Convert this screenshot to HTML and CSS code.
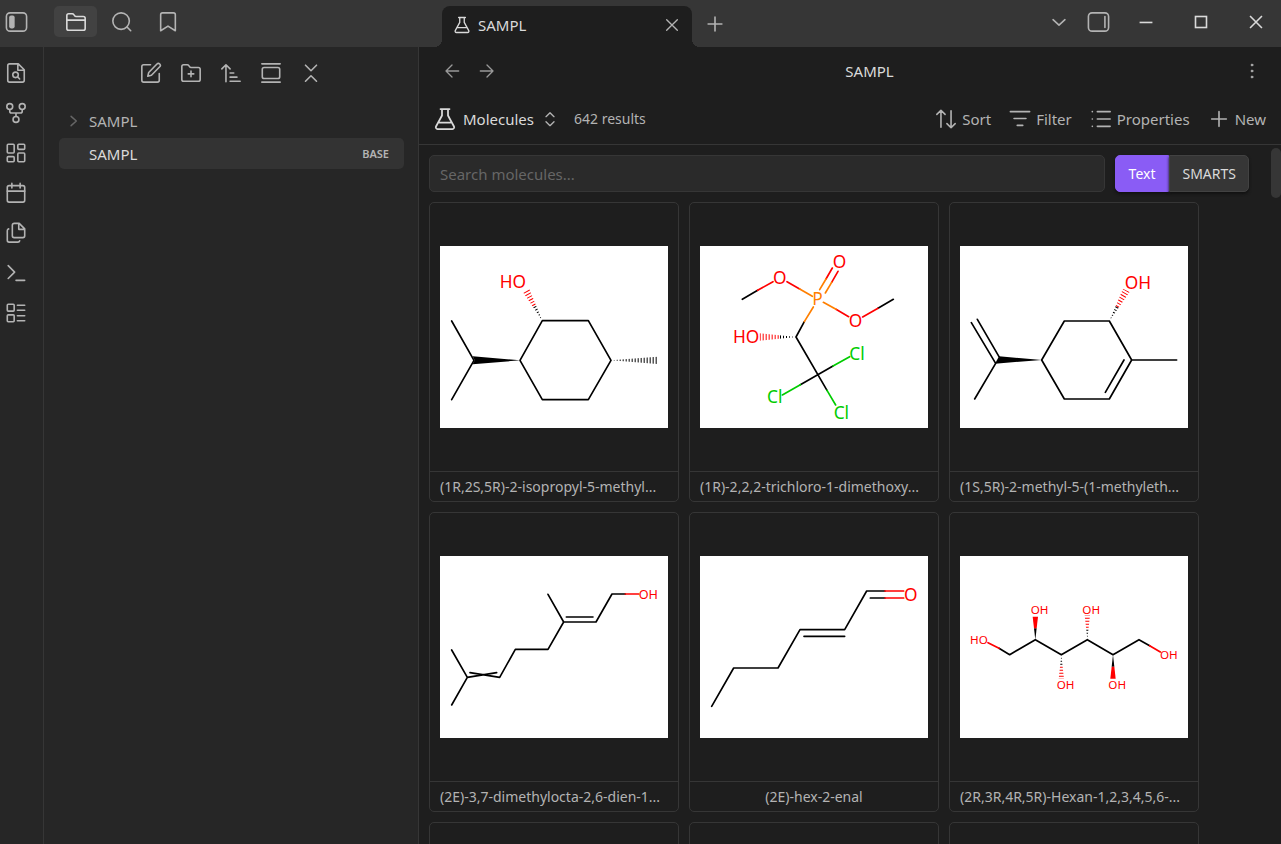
FILE: index.html
```html
<!DOCTYPE html>
<html lang="en">
<head>
<meta charset="utf-8">
<title>SAMPL</title>
<link rel="stylesheet" href="styles.css">
</head>
<body>
<div class="app">
  <header class="titlebar">
    <div class="titlebar-left">
      <button class="icon-btn" aria-label="Toggle left sidebar"><svg class="icon panel" viewBox="0 0 24 24"><rect x="1" y="2" width="22" height="20" rx="4"/><rect x="4" y="5" width="6" height="14" rx="2" class="solid"/></svg></button>
      <nav class="side-tabs">
        <button class="side-tab active" aria-label="Files"><svg class="icon" viewBox="0 0 24 24"><path d="M2 10h20M4 21h16a2 2 0 0 0 2-2V8a2 2 0 0 0-2-2h-7.900a2 2 0 0 1-1.700-.9l-.8-1.200A2 2 0 0 0 7.900 3H4a2 2 0 0 0-2 2v14a2 2 0 0 0 2 2z"/></svg></button>
        <button class="side-tab" aria-label="Search"><svg class="icon" viewBox="0 0 24 24"><circle cx="11" cy="11" r="9"/><path d="m21.500 21.500-4-4"/></svg></button>
        <button class="side-tab" aria-label="Bookmarks"><svg class="icon" viewBox="0 0 24 24"><path d="m20 21.500-8-5-8 5V4a2 2 0 0 1 2-2h12a2 2 0 0 1 2 2z"/></svg></button>
      </nav>
    </div>
    <div class="titlebar-main">
      <div class="tab">
        <svg class="icon flask" viewBox="0 0 24 24"><path d="M9 2v6.500L3 19.500A1.700 1.700 0 0 0 4.500 22h15a1.700 1.700 0 0 0 1.500-2.500L15 8.500V2M7.500 2h9M6.500 15.500h11"/></svg>
        <span class="tab-title">SAMPL</span>
        <button class="icon-btn" aria-label="Close tab"><svg class="icon small" viewBox="0 0 24 24"><path d="M4 4l16 16M20 4 4 20"/></svg></button>
      </div>
      <button class="icon-btn new-tab" aria-label="New tab"><svg class="icon" viewBox="0 0 24 24"><path d="M4.500 12h15M12 4.500v15"/></svg></button>
      <div class="window-controls">
        <button class="icon-btn" aria-label="Tab list"><svg class="icon" viewBox="0 0 24 24"><path d="m5.500 9.500 6.500 6 6.500-6"/></svg></button>
        <button class="icon-btn" aria-label="Toggle right sidebar"><svg class="icon panel" viewBox="0 0 24 24"><rect x="1" y="2" width="22" height="20" rx="4"/><path d="M19 6v12"/></svg></button>
        <button class="win-btn" aria-label="Minimize"><svg class="icon" viewBox="0 0 24 24"><path d="M5 12.500h14"/></svg></button>
        <button class="win-btn" aria-label="Maximize"><svg class="icon" viewBox="0 0 24 24"><rect x="6" y="6" width="12" height="12"/></svg></button>
        <button class="win-btn" aria-label="Close"><svg class="icon" viewBox="0 0 24 24"><path d="M5.500 5.500l13 13M18.500 5.500l-13 13"/></svg></button>
      </div>
    </div>
  </header>
  <div class="workspace">
    <nav class="ribbon">
      <button class="icon-btn" aria-label="Quick switcher"><svg class="icon" viewBox="0 0 24 24"><path d="M14.500 2H5a2 2 0 0 0-2 2v16a2 2 0 0 0 2 2h14a2 2 0 0 0 2-2V8.500zM14 2v7h7"/><circle cx="11.500" cy="14" r="3"/><path d="m14 16.500 2 2"/></svg></button>
      <button class="icon-btn" aria-label="Graph view"><svg class="icon" viewBox="0 0 24 24"><circle cx="12" cy="19" r="3.200"/><circle cx="5.200" cy="5" r="3.200"/><circle cx="18.800" cy="5" r="3.200"/><path d="M18.800 8.200V10a2 2 0 0 1-2 2H7.200a2 2 0 0 1-2-2V8.200M12 12v3.800"/></svg></button>
      <button class="icon-btn" aria-label="Canvas"><svg class="icon" viewBox="0 0 24 24"><rect x="2.500" y="2.500" width="7.500" height="9.500" rx="1"/><rect x="14" y="2.500" width="7.500" height="5.500" rx="1"/><rect x="14" y="12" width="7.500" height="9.500" rx="1"/><rect x="2.500" y="16" width="7.500" height="5.500" rx="1"/></svg></button>
      <button class="icon-btn" aria-label="Daily note"><svg class="icon" viewBox="0 0 24 24"><rect x="2.500" y="4" width="19" height="18" rx="2"/><path d="M7.500 1.500v5M16.500 1.500v5M2.500 10h19"/></svg></button>
      <button class="icon-btn" aria-label="Templates"><svg class="icon" viewBox="0 0 24 24"><path d="M15.500 1.500H10a2 2 0 0 0-2 2V15a2 2 0 0 0 2 2h9.500a2 2 0 0 0 2-2V7.500zM15 2v6h6M4 7.500a2 2 0 0 0-1.500 2V20a2 2 0 0 0 2 2H14a2 2 0 0 0 2-1.500"/></svg></button>
      <button class="icon-btn" aria-label="Command palette"><svg class="icon" viewBox="0 0 24 24"><path d="m3.500 18 7-7-7-7M12 20h9.500"/></svg></button>
      <button class="icon-btn" aria-label="Bases"><svg class="icon" viewBox="0 0 24 24"><rect x="2.500" y="2.500" width="7.500" height="7.500" rx="1"/><rect x="2.500" y="14" width="7.500" height="7.500" rx="1"/><path d="M13.500 3.500h8M13.500 9h8M13.500 15h8M13.500 20.500h8"/></svg></button>
    </nav>
    <aside class="sidebar">
      <div class="nav-buttons">
        <button class="icon-btn" aria-label="New note"><svg class="icon" viewBox="0 0 24 24"><path d="M11.500 3H4a2 2 0 0 0-2 2v15a2 2 0 0 0 2 2h15a2 2 0 0 0 2-2v-7.500"/><path d="M18.500 2.200a2.100 2.100 0 0 1 3 3L12.500 14.500l-4 1 1-4z"/></svg></button>
        <button class="icon-btn" aria-label="New folder"><svg class="icon" viewBox="0 0 24 24"><path d="M12 10v6M9 13h6M20 21a2 2 0 0 0 2-2V8a2 2 0 0 0-2-2h-7.900a2 2 0 0 1-1.700-.9l-.8-1.200A2 2 0 0 0 7.900 3H4a2 2 0 0 0-2 2v14a2 2 0 0 0 2 2z"/></svg></button>
        <button class="icon-btn" aria-label="Sort order"><svg class="icon" viewBox="0 0 24 24"><path d="m2 7.500 4.500-4.500L11 7.500M6.500 3v18.500M11 12h4M11 16.500h7.500M11 21h11"/></svg></button>
        <button class="icon-btn" aria-label="Auto-reveal file"><svg class="icon" viewBox="0 0 24 24"><path d="M2 2h20M2 22h20"/><rect x="2.500" y="6" width="19" height="12" rx="2"/></svg></button>
        <button class="icon-btn" aria-label="Collapse all"><svg class="icon" viewBox="0 0 24 24"><path d="m6 21 6-6 6 6M6 3.500l6 6 6-6"/></svg></button>
      </div>
      <div class="tree">
        <a class="tree-item" href="#"><svg class="icon chevron" viewBox="0 0 24 24"><path d="m7 4 9 8-9 8"/></svg><span class="tree-name">SAMPL</span></a>
        <a class="tree-item active" href="#"><span class="chevron"></span><span class="tree-name">SAMPL</span><span class="tag">BASE</span></a>
      </div>
    </aside>
    <main class="view">
      <div class="view-header">
        <div class="history">
          <button class="icon-btn" aria-label="Back"><svg class="icon small" viewBox="0 0 24 24"><path d="M22 12H3M12 21l-9-9 9-9"/></svg></button>
          <button class="icon-btn" aria-label="Forward"><svg class="icon small" viewBox="0 0 24 24"><path d="M2 12h19M12 3l9 9-9 9"/></svg></button>
        </div>
        <h1 class="view-title">SAMPL</h1>
        <button class="icon-btn" aria-label="More options"><svg class="icon small dots" viewBox="0 0 24 24"><circle cx="12" cy="3" r="1.500"/><circle cx="12" cy="12" r="1.500"/><circle cx="12" cy="21" r="1.500"/></svg></button>
      </div>
      <div class="toolbar">
        <button class="tool-btn views"><svg class="icon large flask" viewBox="0 0 24 24"><path d="M9 2v6.500L3 19.500A1.700 1.700 0 0 0 4.500 22h15a1.700 1.700 0 0 0 1.500-2.500L15 8.500V2M7.500 2h9M6.500 15.500h11"/></svg><span>Molecules</span><svg class="icon small" viewBox="0 0 24 24"><path d="m6 16 6 6 6-6M6 8.500l6-6 6 6"/></svg></button>
        <span class="results">642 results</span>
        <div class="tools">
          <button class="tool-btn"><svg class="icon" viewBox="0 0 24 24"><path d="M2 7l4.500-4.500L11 7M6.500 2.500v18.500M22 17l-4.500 4.500L13 17M17.500 21.500V3"/></svg>Sort</button>
          <button class="tool-btn"><svg class="icon" viewBox="0 0 24 24"><path d="M1.500 4h21M5.500 11.500h13M9 19h6"/></svg>Filter</button>
          <button class="tool-btn"><svg class="icon" viewBox="0 0 24 24"><path d="M8 4h14M8 12h14M8 20h14M2.500 4h.1M2.500 12h.1M2.500 20h.1"/></svg>Properties</button>
          <button class="tool-btn"><svg class="icon" viewBox="0 0 24 24"><path d="M4 12h16M12 4v16"/></svg>New</button>
        </div>
      </div>
      <div class="content">
        <div class="search-row">
          <input class="search" type="text" placeholder="Search molecules..." aria-label="Search molecules">
          <div class="modes"><button class="mode on">Text</button><button class="mode">SMARTS</button></div>
        </div>
        <div class="cards">
          <article class="card">
            <div class="cover"><svg class="mol" viewBox="45 136 684 547">
              <clipPath id="a1"><path d="M352 360 293 273 312 263z"/></clipPath>
              <clipPath id="a2"><path d="M558 479 697 468V490z"/></clipPath>
              <path d="M352 360H490L558 479 490 597H352L285 479zM80 361l67 118-67 118"/>
              <path class="fill" d="M285 479 143 467 149 479 143 491z"/>
              <g clip-path="url(#a1)"><path class="hash" d="M352 360 327 314"/><path class="hash o" d="M327 314 300 264"/></g>
              <g clip-path="url(#a2)"><path class="hash" d="M695 479H558"/></g>
              <text class="ot" x="224" y="262">HO</text>
            </svg></div>
            <h2 class="card-title long">(1R,2S,5R)-2-isopropyl-5-methyl...</h2>
          </article>
          <article class="card">
            <div class="cover"><svg class="mol" viewBox="45 136 684 547">
              <clipPath id="b1"><path d="M333 409 224 398V420z"/></clipPath>
              <path d="M172 296l46-27M625 296l-46 27M358 363 333 409 426 569M444 496 346 552"/>
              <path class="o" d="M218 269l46-26M306 243l38 22M579 323l-46 26M491 348l-38-22M442 202 423 235M459 212 440 245"/>
              <path class="p" d="M344 265l38 22M423 235 404 267M440 245 421 277M453 326l-38-21M385 319 358 363"/>
              <path class="cl" d="M444 496l50-28M346 552l-54 31M426 569l26 44"/>
              <g clip-path="url(#b1)"><path class="hash" d="M333 409H281"/><path class="hash o" d="M281 409H224"/></g>
              <text class="ot" x="443" y="202">O</text><text class="ot" x="264" y="250">O</text><text class="ot" x="491" y="380">O</text><text class="ot" x="144" y="427">HO</text>
              <text class="pt" x="382" y="313">P</text>
              <text class="ct" x="493" y="478">Cl</text><text class="ct" x="246" y="608">Cl</text><text class="ct" x="446" y="655">Cl</text>
            </svg></div>
            <h2 class="card-title long">(1R)-2,2,2-trichloro-1-dimethoxy...</h2>
          </article>
          <article class="card">
            <div class="cover"><svg class="mol" viewBox="45 136 684 547">
              <clipPath id="c1"><path d="M493 361 534 264 554 274z"/></clipPath>
              <path d="M493 361 560 478 493 595H358L290 478 358 361zM560 478H695M537 478 481 575M89 595 152 488M79 366l73 122M97 356l65 112"/>
              <path class="fill" d="M290 478 162 467 150 489z"/>
              <g clip-path="url(#c1)"><path class="hash" d="M493 361 516 318"/><path class="hash o" d="M516 318 544 268"/></g>
              <text class="ot" x="539" y="264">OH</text>
            </svg></div>
            <h2 class="card-title long">(1S,5R)-2-methyl-5-(1-methyleth...</h2>
          </article>
          <article class="card">
            <div class="cover"><svg class="mol" viewBox="45 136 684 547">
              <path d="M369 251 416 334H513L561 250H601M424 319h80M416 334 369 416H271L224 500 135 486M215 486 127 500 80 418M127 500 80 583"/>
              <path class="o" d="M601 250h40"/>
              <text class="ot s1" x="641" y="264">OH</text>
            </svg></div>
            <h2 class="card-title long">(2E)-3,7-dimethylocta-2,6-dien-1...</h2>
          </article>
          <article class="card">
            <div class="cover"><svg class="mol" viewBox="45 136 684 547">
              <path d="M80 587 146 472H279L345 357H479L545 241H600M357 377H479M556 262H600"/>
              <path class="o" d="M600 241h56M600 262h56"/>
              <text class="ot" x="657" y="271">O</text>
            </svg></div>
            <h2 class="card-title">(2E)-hex-2-enal</h2>
          </article>
          <article class="card">
            <div class="cover"><svg class="mol" viewBox="45 136 684 547">
              <clipPath id="f1"><path d="M349 432 341 505H357z"/></clipPath>
              <clipPath id="f2"><path d="M427 387 419 314H435z"/></clipPath>
              <path d="M162 413 194 432 271 387 349 432 427 387 504 432 582 387 614 405"/>
              <path class="o" d="M162 413 129 396M614 405l32 19"/>
              <path class="fill" d="M271 387 267 353H275z"/><path class="fill of" d="M267 353 263 318H279L275 353z"/>
              <path class="fill" d="M504 432 500 468H508z"/><path class="fill of" d="M500 468 496 504H512L508 468z"/>
              <g clip-path="url(#f1)"><path class="hash" d="M349 432V468"/><path class="hash o" d="M349 468V505"/></g>
              <g clip-path="url(#f2)"><path class="hash" d="M427 387V351"/><path class="hash o" d="M427 351V314"/></g>
              <text class="ot s2" x="75" y="401">HO</text><text class="ot s2" x="257" y="311">OH</text><text class="ot s2" x="412" y="311">OH</text><text class="ot s2" x="335" y="535">OH</text><text class="ot s2" x="490" y="535">OH</text><text class="ot s2" x="645" y="445">OH</text>
            </svg></div>
            <h2 class="card-title long">(2R,3R,4R,5R)-Hexan-1,2,3,4,5,6-...</h2>
          </article>
          <article class="card"><div class="cover"></div></article>
          <article class="card"><div class="cover"></div></article>
          <article class="card"><div class="cover"></div></article>
        </div>
        <div class="scroll-thumb"></div>
      </div>
    </main>
  </div>
</div>
</body>
</html>
```
FILE: styles.css
```css
* { box-sizing: border-box; }
body {
  margin: 0;
  background: #1e1e1e;
  color: #dadada;
  font: 15px/20px "Noto Sans", "Open Sans", sans-serif;
}
button {
  margin: 0;
  padding: 0;
  border: 0;
  background: none;
  color: inherit;
  font: inherit;
}
h1, h2 { margin: 0; font-weight: 400; }
a { color: inherit; text-decoration: none; }

.app { display: flex; flex-direction: column; height: 100vh; overflow: hidden; }

.icon {
  display: block;
  flex: none;
  width: 22px;
  height: 22px;
  fill: none;
  stroke: currentColor;
  stroke-width: 1.75;
  stroke-linecap: round;
  stroke-linejoin: round;
}
.icon.small { width: 16px; height: 16px; stroke-width: 2; }
.icon.large { width: 24px; height: 24px; }
.icon .solid { fill: currentColor; stroke: none; }
.icon.dots { fill: currentColor; stroke-width: 1; }
.icon-btn { display: flex; align-items: center; justify-content: center; color: #b3b3b3; }

.titlebar { display: flex; flex: none; height: 47px; background: #363636; color: #b3b3b3; }
.titlebar-left { display: flex; width: 419px; padding: 6px 0 10px 5px; gap: 26px; }
.titlebar-left .panel, .window-controls .panel { width: 23px; height: 22px; }
.side-tabs { display: flex; gap: 3px; }
.side-tab {
  display: flex;
  align-items: center;
  justify-content: center;
  width: 43px;
  height: 31px;
  border-radius: 5px;
}
.side-tab.active { background: #424242; color: #dadada; }
.titlebar-main { display: flex; flex: 1; padding-left: 23px; }
.tab {
  position: relative;
  display: flex;
  align-items: center;
  width: 250px;
  margin-top: 6px;
  padding: 0 12px 3px 11px;
  gap: 7px;
  border-radius: 8px 8px 0 0;
  background: #1e1e1e;
  color: #dadada;
}
.tab .flask { width: 18px; height: 18px; }
.tab::before, .tab::after {
  content: "";
  position: absolute;
  bottom: 0;
  width: 8px;
  height: 8px;
}
.tab::before { right: 100%; background: radial-gradient(circle at 0 0, transparent 8px, #1e1e1e 8px); }
.tab::after { left: 100%; background: radial-gradient(circle at 100% 0, transparent 8px, #1e1e1e 8px); }
.tab-title { flex: 1; }
.new-tab { width: 46px; }
.window-controls { display: flex; align-items: center; height: 44px; margin-left: auto; padding-right: 6px; gap: 17px; }
.win-btn { display: flex; align-items: center; justify-content: center; width: 38px; color: #dadada; }
.win-btn .icon { stroke-linecap: butt; stroke-linejoin: miter; }

.workspace { display: flex; flex: 1; min-height: 0; }
.ribbon {
  display: flex;
  flex-direction: column;
  align-items: flex-start;
  width: 44px;
  padding: 15px 5px;
  gap: 18px;
  border-right: 1px solid #363636;
  background: #262626;
}
.sidebar { width: 375px; border-right: 1px solid #363636; background: #262626; }
.nav-buttons { display: flex; justify-content: center; padding: 15px 0 21px; gap: 18px; }
.tree { display: flex; flex-direction: column; padding: 0 14px 0 15px; gap: 2px; }
.tree-item {
  display: flex;
  align-items: center;
  height: 31px;
  padding: 0 15px 0 8px;
  gap: 8px;
  border-radius: 5px;
  color: #b3b3b3;
}
.tree-item.active { background: #333333; color: #dadada; }
.tree-name { flex: 1; }
.chevron { width: 14px; height: 14px; color: #666666; stroke-width: 2.5; }
.tag { color: #b3b3b3; font-size: 11px; font-weight: 600; }

.view { display: flex; flex: 1; flex-direction: column; min-width: 0; }
.view-header { display: flex; align-items: center; height: 47px; padding: 0 21px 0 25px; }
.history { display: flex; gap: 19px; }
.history .icon-btn { color: #999999; }
.view-title { flex: 1; font-size: 15px; text-align: center; }
.toolbar {
  display: flex;
  align-items: center;
  height: 51px;
  padding: 0 15px 0 14px;
  border-bottom: 1px solid #363636;
}
.tool-btn { display: flex; align-items: center; gap: 5px; color: #b3b3b3; }
.tool-btn.views { gap: 6px; }
.views span { color: #dadada; }
.views .large { color: #dadada; }
.views .small { margin-left: 2px; }
.results { margin-left: 16px; color: #b3b3b3; font-size: 14px; }
.tools { display: flex; margin-left: auto; gap: 18px; }

.content { position: relative; flex: 1; min-height: 0; padding: 10px 32px 0 10px; overflow: hidden; }
.search-row { display: flex; gap: 10px; margin-bottom: 10px; }
.search {
  flex: 1;
  min-width: 0;
  height: 37px;
  padding: 0 10px;
  border: 1px solid #363636;
  border-radius: 5px;
  outline: 0;
  background: #2a2a2a;
  color: #dadada;
  font: inherit;
}
.search::placeholder { color: #666666; opacity: 1; }
.modes { display: flex; }
.mode {
  padding: 0 12px;
  border: 1px solid #424242;
  border-radius: 0 5px 5px 0;
  background: #363636;
  box-shadow: 0 2px 3px #111111;
  font-size: 14px;
}
.mode.on { padding: 0 13px; border-color: #8a5cf5; border-radius: 5px 0 0 5px; background: #8a5cf5; color: #ffffff; }
.cards { display: grid; grid-template-columns: repeat(auto-fill, 250px); gap: 10px; }
.card { border: 1px solid #363636; border-radius: 5px; }
.cover { display: flex; align-items: center; height: 269px; padding: 0 10px; border-bottom: 1px solid #363636; }
.card-title {
  height: 29px;
  padding: 0 10px;
  overflow: hidden;
  color: #b3b3b3;
  font-size: 14px;
  line-height: 29px;
  text-align: center;
  white-space: nowrap;
}
.card-title.long { text-align: left; }
.scroll-thumb {
  position: absolute;
  top: 3px;
  right: 0;
  width: 10px;
  height: 50px;
  border-radius: 5px;
  background: #363636;
}

.mol { display: block; width: 100%; background: #ffffff; fill: none; stroke: #000000; stroke-width: 5; stroke-linecap: round; stroke-linejoin: round; }
.mol .fill { fill: #000000; stroke: none; }
.mol .of { fill: #ff0000; }
.mol .o { stroke: #ff0000; }
.mol .p { stroke: #ff7f00; }
.mol .cl { stroke: #00cc00; }
.mol .hash { stroke-width: 24; stroke-linecap: butt; stroke-dasharray: 3 6; }
.mol text { stroke: none; font-family: "Noto Sans", sans-serif; font-size: 52px; }
.mol .ot { fill: #ff0000; }
.mol .pt { fill: #ff7f00; }
.mol .ct { fill: #00cc00; }
.mol .s1 { font-size: 38px; }
.mol .s2 { font-size: 35px; }
```
